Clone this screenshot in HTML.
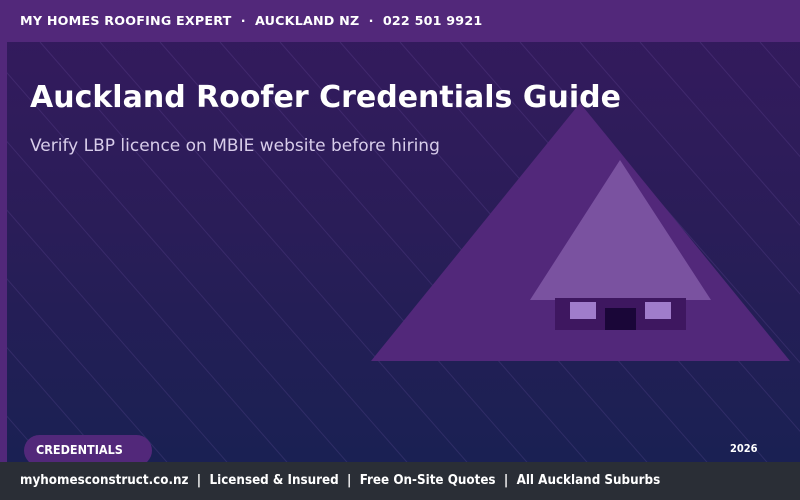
<!DOCTYPE html>
<html><head><meta charset="utf-8"><style>
*{margin:0;padding:0;box-sizing:border-box}
body{width:800px;height:500px;overflow:hidden;position:relative;font-family:"DejaVu Sans","Liberation Sans",sans-serif;background:linear-gradient(180deg,#351a5e 0%,#2a1d58 45%,#172152 100%)}
.top{position:absolute;left:0;top:0;width:800px;height:42px;background:#52287a;color:#fff;font-weight:bold;font-size:12.7px;line-height:42px;padding-left:20px;letter-spacing:0.2px}
.stripe{position:absolute;left:0;top:42px;width:7px;height:420px;background:#52287a}
h1{position:absolute;left:30px;top:80px;color:#fff;font-size:30px;font-weight:bold;white-space:nowrap}
.sub{position:absolute;left:30px;top:136px;color:#d8cdea;font-size:17px}
.badge{position:absolute;left:24px;top:435px;width:128px;height:31px;border-radius:16px;background:#52287a;color:#fff;font-weight:bold;font-size:12.5px;font-stretch:condensed;line-height:30px;padding-left:12px}
.yr{position:absolute;left:730px;top:442px;color:#fff;font-size:11px;font-weight:bold;font-stretch:condensed}
.foot{position:absolute;left:0;top:462px;width:800px;height:38px;background:#2a2e36;color:#fff;font-size:13.3px;font-weight:bold;font-stretch:condensed;line-height:38px;padding-left:20px;white-space:pre}
svg{position:absolute;left:0;top:0}
</style></head><body>
<svg width="800" height="500">
<g stroke="#8a6cc0" stroke-opacity="0.18" stroke-width="1">
<line x1="-500" y1="42" x2="-100" y2="500"/><line x1="-440" y1="42" x2="-40" y2="500"/><line x1="-380" y1="42" x2="20" y2="500"/><line x1="-320" y1="42" x2="80" y2="500"/><line x1="-260" y1="42" x2="140" y2="500"/><line x1="-200" y1="42" x2="200" y2="500"/><line x1="-140" y1="42" x2="260" y2="500"/><line x1="-80" y1="42" x2="320" y2="500"/><line x1="-20" y1="42" x2="380" y2="500"/><line x1="40" y1="42" x2="440" y2="500"/><line x1="100" y1="42" x2="500" y2="500"/><line x1="160" y1="42" x2="560" y2="500"/><line x1="220" y1="42" x2="620" y2="500"/><line x1="280" y1="42" x2="680" y2="500"/><line x1="340" y1="42" x2="740" y2="500"/><line x1="400" y1="42" x2="800" y2="500"/><line x1="460" y1="42" x2="860" y2="500"/><line x1="520" y1="42" x2="920" y2="500"/><line x1="580" y1="42" x2="980" y2="500"/><line x1="640" y1="42" x2="1040" y2="500"/><line x1="700" y1="42" x2="1100" y2="500"/><line x1="760" y1="42" x2="1160" y2="500"/>
</g>
<polygon points="580,103 371,361 790,361" fill="#52287a"/>
<polygon points="620,160 530,300 711,300" fill="#7a52a0"/>
<rect x="555" y="298" width="131" height="32" fill="#3e1760"/>
<rect x="570" y="302" width="26" height="17" fill="#a07ccb"/>
<rect x="645" y="302" width="26" height="17" fill="#a07ccb"/>
<rect x="605" y="308" width="31" height="22" fill="#1a0638"/>
</svg>
<div class="top">MY HOMES ROOFING EXPERT &nbsp;·&nbsp; AUCKLAND NZ &nbsp;·&nbsp; 022 501 9921</div>
<div class="stripe"></div>
<h1>Auckland Roofer Credentials Guide</h1>
<div class="sub">Verify LBP licence on MBIE website before hiring</div>
<div class="badge">CREDENTIALS</div>
<div class="yr">2026</div>
<div class="foot">myhomesconstruct.co.nz  |  Licensed &amp; Insured  |  Free On-Site Quotes  |  All Auckland Suburbs</div>
</body></html>
